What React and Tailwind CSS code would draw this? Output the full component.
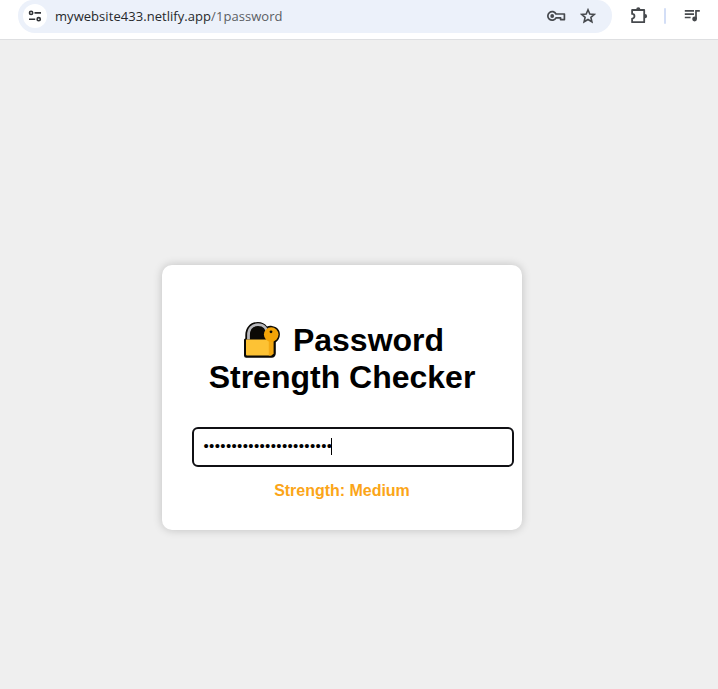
function TuneIcon() {
  return (
    <svg width="14" height="14" viewBox="0 0 14 14" fill="none" stroke="#303236" strokeWidth="1.6">
      <circle cx="3.1" cy="3.9" r="1.6" />
      <path d="M6.5 3.9H13M1 10.2H7.2" />
      <circle cx="10.7" cy="10.2" r="1.6" />
    </svg>
  );
}

function KeyIcon() {
  return (
    <svg width="20" height="14" viewBox="0 0 20 14" fill="none" stroke="#46494d" strokeWidth="1.7">
      <path d="M10 5H18.4V10.6H14.6V8.8H10A4.3 4.3 0 1 1 10 5Z" strokeLinejoin="round" />
      <circle cx="6.2" cy="7" r="1.9" fill="#46494d" stroke="none" />
    </svg>
  );
}

function StarIcon() {
  return (
    <svg width="16" height="16" viewBox="0 0 16 16" fill="none" stroke="#46494d" strokeWidth="1.6">
      <path d="M8 1.8L9.8 6L14.3 6.4L10.9 9.4L11.9 13.8L8 11.5L4.1 13.8L5.1 9.4L1.7 6.4L6.2 6Z" />
    </svg>
  );
}

function PuzzleIcon() {
  return (
    <svg width="18" height="18" viewBox="0 0 18 18" fill="none">
      <path
        d="M2.1 3H14.2V15.2H2.1V11.6A2.2 2.2 0 0 0 2.1 6.9Z"
        stroke="#46494d"
        strokeWidth="1.8"
        strokeLinejoin="round"
      />
      <path d="M6.2 2.4a2.1 2.1 0 0 1 4.2 0ZM15 7.1a2.1 2.1 0 0 1 0 4.2Z" fill="#46494d" />
    </svg>
  );
}

function PlaylistIcon() {
  return (
    <svg width="16" height="14" viewBox="0 0 16 14" fill="none" stroke="#46494d" strokeWidth="1.7">
      <path d="M0.8 1.9H10M0.8 5.2H10M0.8 8.5H6.6M12 10V1.9H15.8" />
      <circle cx="10.6" cy="10" r="2.4" fill="#46494d" stroke="none" />
    </svg>
  );
}

function LockWithKey() {
  return (
    <svg className="-mt-[3px] inline-block shrink-0" width="44" height="37" viewBox="0 0 44 37">
      <path
        d="M5.3 17.4V14.5C5.3 6 10.8 0.9 17.8 0.9C22 0.9 25 2.6 27 5.4C28.6 4.7 30.2 4.6 32 4.9C37 5.6 39.9 9 39.9 13.3C39.9 17 38.3 19.6 35.8 21.2V32.2C35.8 34.8 34.2 36.8 31.6 36.8H6.2Q4 36.8 4 34.6V19Q4 17.8 5.3 17.4Z"
        fill="#0b0905"
      />
      <path d="M8.5 18.4V14.2C8.5 7.5 12.4 3.7 18 3.7S27.5 7.5 27.5 14.2V18.4" fill="none" stroke="#b9b9bd" strokeWidth="2.8" />
      <path d="M6 18.6H31V34.6H7Q6 34.6 6 33.6Z" fill="#fdc234" />
      <path d="M28.8 18.4H33.6V32.4L31.6 34.6H28.8Z" fill="#f3a914" />
      <circle cx="31.2" cy="13.6" r="7.3" fill="#f3a407" />
      <circle cx="31" cy="10.8" r="1.4" fill="#0b0905" />
    </svg>
  );
}

function Toolbar() {
  return (
    <header className="flex h-10 shrink-0 items-start border-b border-[#dedfe1] bg-white pl-[18px]">
      <div className="flex h-[33px] w-[594px] items-center rounded-b-[17px] rounded-t-[15px] bg-[#ecf1fa] pb-px pl-[5px] pr-4">
        <div className="flex size-6 items-center justify-center rounded-full bg-white">
          <TuneIcon />
        </div>
        <div className="-mt-px ml-2 flex-1 whitespace-nowrap font-['Open_Sans','Noto_Sans',sans-serif] text-[13px] leading-5 tracking-[0.05px] text-[#27292c]">
          mywebsite433.netlify.app<span className="text-[#5b5e63]">/1password</span>
        </div>
        <div className="flex items-center gap-[14px]">
          <KeyIcon />
          <StarIcon />
        </div>
      </div>
      <div className="flex h-8 items-center">
        <div className="ml-[18px]"><PuzzleIcon /></div>
        <div className="ml-4 h-4 w-0.5 rounded-full bg-[#d3def6]" />
        <div className="-mt-px ml-[18px]"><PlaylistIcon /></div>
      </div>
    </header>
  );
}

export default function App() {
  const password = "•".repeat(23);
  return (
    <div className="flex h-[689px] w-[718px] flex-col overflow-hidden bg-[#efefef] font-['Liberation_Sans',Arial,sans-serif] text-black">
      <Toolbar />
      <main className="pl-[162px] pt-[225px]">
        <section className="flex h-[265px] w-[360px] flex-col rounded-[10px] bg-white px-[30px] pt-[57px] shadow-[0_0_10px_rgba(0,0,0,0.2)]">
          <h1 className="text-center text-[32px] font-bold leading-[37px]">
            <span className="flex items-center justify-center">
              <LockWithKey />
              <span className="ml-[9px]">Password</span>
            </span>
            <span className="block">Strength Checker</span>
          </h1>
          <div className="mt-[31px] flex h-10 w-[322px] items-center rounded-[6px] border-2 border-[#101014] bg-white pb-px pl-[9.5px] text-base leading-[18px]">
            <span className="-mt-px text-[15px] tracking-[0.35px]">{password}</span>
            <span className="-ml-px h-[17px] w-px bg-black" />
          </div>
          <p className="mt-[15px] text-center text-base font-bold leading-[18px] tracking-[-0.02px] text-[#fba518]">Strength: Medium</p>
        </section>
      </main>
    </div>
  );
}
